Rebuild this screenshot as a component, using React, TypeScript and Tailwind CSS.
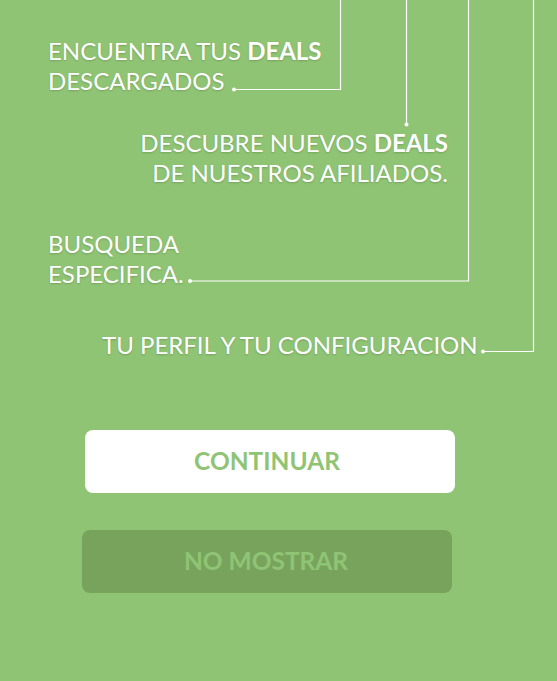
// Onboarding overlay — hints with connector lines + two action buttons.
const shadow = "[text-shadow:0_1px_2px_rgba(0,0,0,0.18)]";

function Connectors() {
  // connector lines from the top edge down to each hint
  return (
    <svg
      className="pointer-events-none absolute inset-0"
      width="557"
      height="681"
      viewBox="0 0 557 681"
      fill="none"
      aria-hidden
    >
      <g stroke="#ffffff" strokeWidth="1.2">
        <polyline points="340.5,0 340.5,89.5 234,89.5" />
        <polyline points="406.5,0 406.5,124.5" />
        <polyline points="468.5,0 468.5,281 190,281" />
        <polyline points="533.5,0 533.5,351.5 483,351.5" />
      </g>
      <g fill="#ffffff">
        <circle cx="234" cy="89.5" r="2" />
        <circle cx="406.5" cy="124.5" r="2" />
        <circle cx="190" cy="281" r="2" />
        <circle cx="483" cy="351.5" r="2" />
      </g>
    </svg>
  );
}

export default function App() {
  return (
    <div
      className="relative flex h-[681px] w-[557px] flex-col overflow-hidden bg-[#8fc474] text-white"
      style={{ fontFamily: "Lato, 'Open Sans', sans-serif" }}
    >
      <Connectors />

      <div className="flex flex-col text-[24px] leading-[30px]">
        <p className={`pl-[48px] pt-[36px] ${shadow}`}>
          ENCUENTRA TUS <span className="font-bold">DEALS</span>
          <br />
          DESCARGADOS
        </p>

        <p className={`mt-[32px] pr-[109px] text-right ${shadow}`}>
          DESCUBRE NUEVOS <span className="font-bold">DEALS</span>
          <br />
          DE NUESTROS AFILIADOS.
        </p>

        <p className={`mt-[41px] pl-[48px] ${shadow}`}>
          BUSQUEDA
          <br />
          ESPECIFICA.
        </p>

        <p className={`mt-[41px] pl-[102px] ${shadow}`}>TU PERFIL Y TU CONFIGURACION</p>
      </div>

      <div className="mt-[70px] flex flex-col items-start">
        <button
          type="button"
          className="ml-[85px] flex h-[63px] w-[370px] items-center justify-center rounded-[8px] bg-white pr-[6px] text-[24.5px] font-bold text-[#8fc474]"
        >
          CONTINUAR
        </button>
        <button
          type="button"
          className="ml-[82px] mt-[37px] flex h-[63px] w-[370px] items-center justify-center rounded-[8px] bg-[#78a35d] pr-[2px] text-[24.5px] font-bold text-[#8fc474]"
        >
          NO MOSTRAR
        </button>
      </div>
    </div>
  );
}
